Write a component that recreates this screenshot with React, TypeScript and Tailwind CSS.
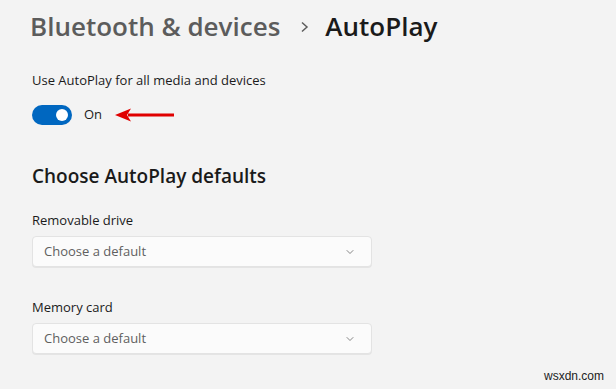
import { ChevronDown } from 'lucide-react';

const font = { fontFamily: '"Segoe UI", "Open Sans", "Noto Sans", sans-serif' };

function Dropdown({ label, gap }: { label: string; gap: string }) {
  return (
    <div className={gap}>
      <div className="text-[13px] leading-5 text-[#1b1b1b]">{label}</div>
      <div className="mt-[6px] flex h-[31px] w-[340px] items-center justify-between rounded-[4px] border border-[#e3e3e3] bg-[#fbfbfb] pl-[11px] pr-[15px] shadow-[0_1px_0_rgba(0,0,0,0.06)]">
        <span className="text-[13px] text-[#5f5f5f]">Choose a default</span>
        <ChevronDown className="h-[12px] w-[12px] text-[#5f5f5f]" strokeWidth={1.5} />
      </div>
    </div>
  );
}

export default function App() {
  return (
    <div className="relative h-[389px] w-[616px] overflow-hidden bg-[#f3f3f3]" style={font}>
      <div className="pl-[30px] pt-[6px]">
        <h1 className="flex items-center text-[26px] font-semibold leading-[40px]">
          <span className="text-[#5c5c5c]">Bluetooth &amp; devices</span>
          <svg className="ml-[20px] mr-[16px] mt-[2px]" width="9" height="12" viewBox="0 0 9 12">
            <path d="M2 1.5 L7 6 L2 10.5" fill="none" stroke="#5c5c5c" strokeWidth="1.5" />
          </svg>
          <span className="text-[#1a1a1a]">AutoPlay</span>
        </h1>

        <div className="ml-[2px] mt-[24px] text-[13px] leading-5 text-[#1b1b1b]">
          Use AutoPlay for all media and devices
        </div>
        <div className="ml-[2px] mt-[15px] flex items-center">
          <div className="flex h-[20px] w-[40px] items-center justify-end rounded-full bg-[#0067c0] pr-[4px]">
            <div className="h-[12px] w-[12px] rounded-full bg-white" />
          </div>
          <span className="ml-[12px] text-[13px] text-[#1b1b1b]">On</span>
          <svg className="ml-[12px]" width="62" height="14" viewBox="0 0 62 14">
            <path d="M14 5.5 H60 V8.5 H14 Z" fill="#e00000" />
            <path d="M1 7 L17 0.5 L13 7 L17 13.5 Z" fill="#e00000" />
          </svg>
        </div>

        <h2 className="ml-[2px] mt-[37px] text-[19px] font-semibold leading-7 text-[#1a1a1a]">
          Choose AutoPlay defaults
        </h2>

        <div className="ml-[2px]">
          <Dropdown label="Removable drive" gap="mt-[20px]" />
          <Dropdown label="Memory card" gap="mt-[30px]" />
        </div>
      </div>
      <div
        className="absolute bottom-[4px] right-[12px] text-[12px] text-[#222]"
        style={{ fontFamily: '"Liberation Sans", Arial, sans-serif' }}
      >
        wsxdn.com
      </div>
    </div>
  );
}
